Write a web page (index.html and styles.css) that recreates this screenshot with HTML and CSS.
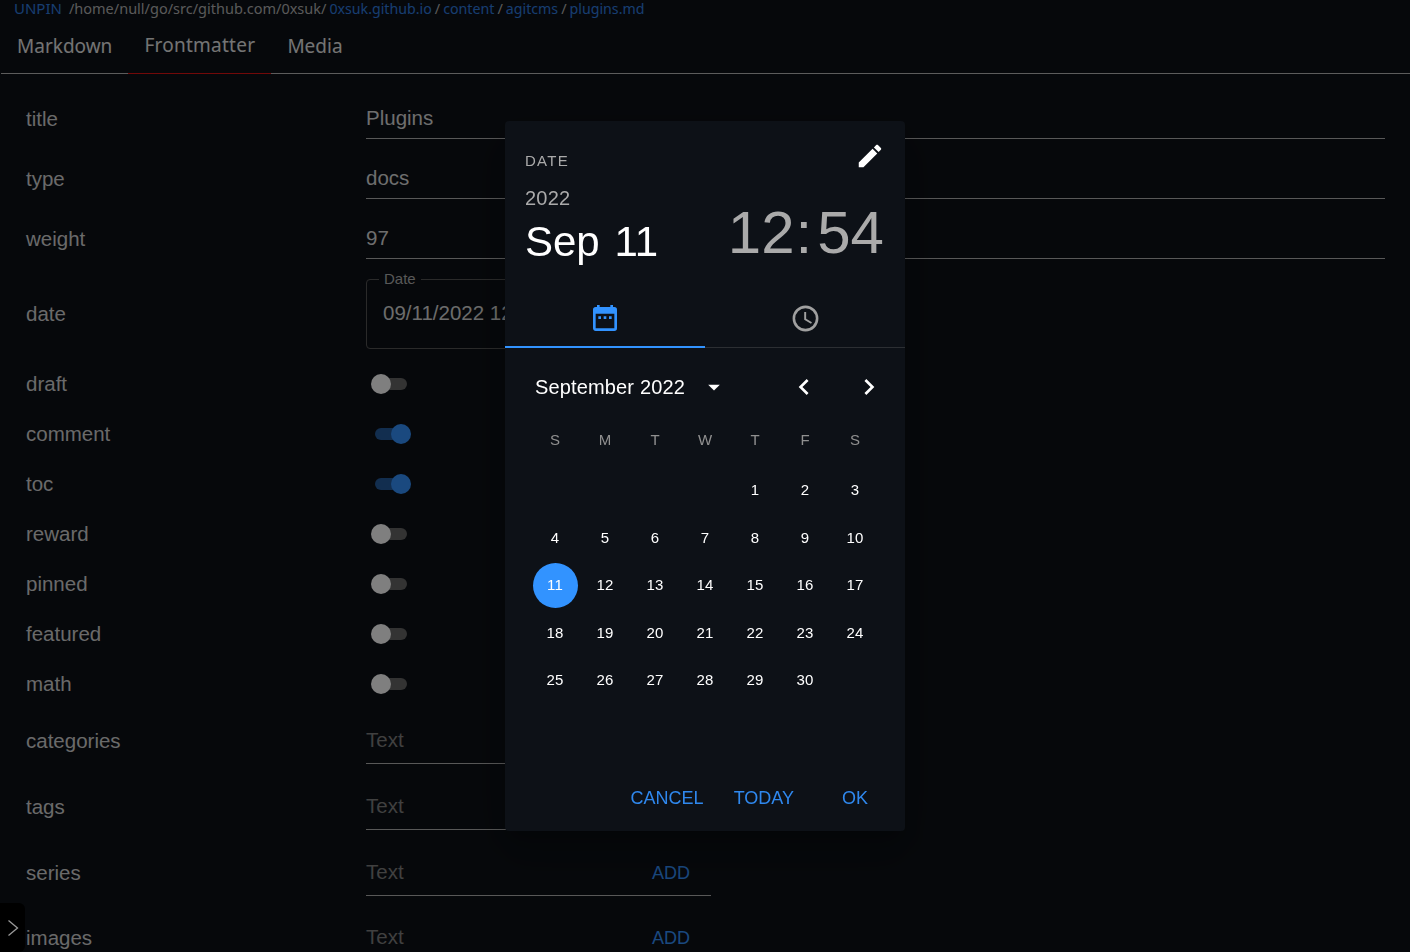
FILE: index.html
```html
<!DOCTYPE html>
<html lang="en">
<head>
  <meta charset="UTF-8">
  <meta name="viewport" content="width=device-width, initial-scale=1.0">
  <title>agitcms</title>
  <link rel="stylesheet" href="styles.css">
</head>

<body>
  <div class="path_bar">
    <a class="unpin">UNPIN</a>
    <span class="path_root">/home/null/go/src/github.com/0xsuk/</span>
    <a>0xsuk.github.io</a><span class="sep">/</span><a>content</a><span class="sep">/</span><a>agitcms</a><span class="sep">/</span><a>plugins.md</a>
  </div>

  <div class="tabs">
    <div class="tab">Markdown</div>
    <div class="tab active">Frontmatter</div>
    <div class="tab">Media</div>
  </div>

  <div class="form">
    <div class="row row_text">
      <div class="label">title</div>
      <div class="field">Plugins</div>
    </div>
    <div class="row row_text">
      <div class="label">type</div>
      <div class="field">docs</div>
    </div>
    <div class="row row_text">
      <div class="label">weight</div>
      <div class="field">97</div>
    </div>
    <div class="row row_date">
      <div class="label">date</div>
      <div class="date_box">
        <span class="date_legend">Date</span>
        09/11/2022 12:54
      </div>
    </div>
    <div class="row row_switch">
      <div class="label">draft</div>
      <div class="switch"><span class="knob"></span></div>
    </div>
    <div class="row row_switch">
      <div class="label">comment</div>
      <div class="switch on"><span class="knob"></span></div>
    </div>
    <div class="row row_switch">
      <div class="label">toc</div>
      <div class="switch on"><span class="knob"></span></div>
    </div>
    <div class="row row_switch">
      <div class="label">reward</div>
      <div class="switch"><span class="knob"></span></div>
    </div>
    <div class="row row_switch">
      <div class="label">pinned</div>
      <div class="switch"><span class="knob"></span></div>
    </div>
    <div class="row row_switch">
      <div class="label">featured</div>
      <div class="switch"><span class="knob"></span></div>
    </div>
    <div class="row row_switch">
      <div class="label">math</div>
      <div class="switch"><span class="knob"></span></div>
    </div>
    <div class="row row_chips">
      <div class="label">categories</div>
      <div class="chip_field"><span class="placeholder">Text</span></div>
    </div>
    <div class="row row_chips">
      <div class="label">tags</div>
      <div class="chip_field"><span class="placeholder">Text</span></div>
    </div>
    <div class="row row_chips">
      <div class="label">series</div>
      <div class="chip_field"><span class="placeholder">Text</span><span class="add">ADD</span></div>
    </div>
    <div class="row row_chips">
      <div class="label">images</div>
      <div class="chip_field"><span class="placeholder">Text</span><span class="add">ADD</span></div>
    </div>
  </div>

  <div class="overlay">
    <div class="dialog">
      <div class="dialog_head">
        <div class="head_left">
          <div class="head_kind">DATE</div>
          <div class="head_year">2022</div>
          <div class="head_date">Sep 11</div>
        </div>
        <div class="head_right">
          <svg class="pencil" viewBox="0 0 24 24"><path d="M20.71,7.04C21.1,6.65 21.1,6 20.71,5.63L18.37,3.29C18,2.9 17.35,2.9 16.96,3.29L15.12,5.12L18.87,8.87M3,17.25V21H6.75L17.81,9.93L14.06,6.18L3,17.25Z"/></svg>
          <div class="head_time"><span>12</span><span class="colon">:</span><span>54</span></div>
        </div>
      </div>

      <div class="picker_tabs">
        <div class="picker_tab active">
          <svg viewBox="0 0 24 24"><path fill-rule="evenodd" d="M19,3A2,2 0 0,1 21,5V19A2,2 0 0,1 19,21H5C3.89,21 3,20.1 3,19V5A2,2 0 0,1 5,3H6V1.5H8V3H16V1.5H18V3H19ZM19,19V8H5V19H19ZM7,10V12H9V10H7ZM11,10V12H13V10H11ZM15,10V12H17V10H15Z"/></svg>
        </div>
        <div class="picker_tab">
          <svg viewBox="0 0 24 24"><path d="M12,20A8,8 0 0,0 20,12A8,8 0 0,0 12,4A8,8 0 0,0 4,12A8,8 0 0,0 12,20M12,2A10,10 0 0,1 22,12A10,10 0 0,1 12,22C6.47,22 2,17.5 2,12A10,10 0 0,1 12,2M12.5,7V12.25L17,14.92L16.25,16.15L11,13V7H12.5Z"/></svg>
        </div>
      </div>

      <div class="month_row">
        <span class="month_name">September 2022</span>
        <svg class="caret" viewBox="0 0 24 24"><path d="M7,10L12,15L17,10H7Z"/></svg>
        <svg class="chev chev_prev" viewBox="0 0 24 24"><path d="M15.41,16.58L10.83,12L15.41,7.41L14,6L8,12L14,18L15.41,16.58Z"/></svg>
        <svg class="chev" viewBox="0 0 24 24"><path d="M8.59,16.58L13.17,12L8.59,7.41L10,6L16,12L10,18L8.59,16.58Z"/></svg>
      </div>

      <div class="weekdays">
        <span>S</span><span>M</span><span>T</span><span>W</span><span>T</span><span>F</span><span>S</span>
      </div>

      <div class="days">
        <span></span><span></span><span></span><span></span>
        <span>1</span><span>2</span><span>3</span>
        <span>4</span><span>5</span><span>6</span><span>7</span><span>8</span><span>9</span><span>10</span>
        <span class="selected">11</span><span>12</span><span>13</span><span>14</span><span>15</span><span>16</span><span>17</span>
        <span>18</span><span>19</span><span>20</span><span>21</span><span>22</span><span>23</span><span>24</span>
        <span>25</span><span>26</span><span>27</span><span>28</span><span>29</span><span>30</span>
      </div>

      <div class="dialog_actions">
        <button>CANCEL</button>
        <button>TODAY</button>
        <button class="ok_btn">OK</button>
      </div>
    </div>
  </div>

  <div class="sidebar_toggle">
    <svg viewBox="0 0 12 18"><polyline points="1.5,1.5 10.5,9 1.5,16.5"/></svg>
  </div>
</body>
</html>
```

FILE: styles.css
```css
body { margin: 0; height: 952px; overflow: hidden; background: #0d1117; color: #dcdcdc; font-family: "Liberation Sans", Arial, sans-serif; }

/* top bars */
.path_bar { height: 18px; box-sizing: border-box; padding: 0 0 2px 14px; display: flex; align-items: baseline; font-family: "Noto Sans", sans-serif; font-size: 14.5px; line-height: 16px; white-space: nowrap; }
.path_bar a { color: #2f7de0; font-size: 14.2px; }
.path_bar .unpin { font-size: 15px; }
.path_root { color: #b4b4b4; margin-left: 7px; margin-right: 3px; }
.sep { color: #b4b4b4; margin: 0 3px; }

.tabs { display: flex; height: 55px; margin-left: 1px; border-bottom: 1px solid #b8b8b8; font-family: "Noto Sans", sans-serif; font-size: 19px; }
.tab { padding: 0 16px; display: flex; align-items: center; color: #e8e8e8; }
.tab.active { width: 111px; height: 54px; letter-spacing: 0.25px; white-space: nowrap; border-bottom: 1px solid #e51212; margin-bottom: -1px; padding-bottom: 1px; }

/* form */
.form { padding: 15px 25px 0 26px; }
.row { display: grid; grid-template-columns: 340px 1fr; }
.label { font-size: 20.5px; align-self: center; color: #d4d4d4; }

.row_text { height: 60px; }
.field { height: 50px; box-sizing: border-box; padding-top: 17px; line-height: 24px; font-size: 20.5px; border-bottom: 1px solid #b0b0b0; }

.row_date { height: 90px; align-items: center; }
.date_box { position: relative; width: 345px; height: 70px; box-sizing: border-box; padding: 21px 16px; line-height: 24px; font-size: 20.5px; color: #d8d8d8; border: 1px solid #555; border-radius: 4px; }
.date_legend { position: absolute; top: -10px; left: 12px; padding: 0 5px; font-size: 15px; line-height: 18px; color: #b0b0b0; background: #0d1117; }

.row_switch { height: 50px; align-items: center; }
.switch { position: relative; width: 32px; height: 12px; margin-left: 9px; border-radius: 6px; background: #666; }
.knob { position: absolute; top: -4px; left: -4px; width: 20px; height: 20px; border-radius: 50%; background: #fff; }
.switch.on { background: #255c9f; }
.switch.on .knob { left: 16px; background: #3493ff; }

.row_chips { height: 66px; }
.row_chips .label { margin-top: -2px; }
.row_chips:last-child .label { margin-top: -4px; }
.chip_field { width: 345px; height: 55px; box-sizing: border-box; padding: 19px 21px 0 0; display: flex; justify-content: space-between; line-height: 24px; border-bottom: 1px solid #b0b0b0; }
.row_chips:last-child .chip_field { padding-top: 18px; }
.placeholder { font-size: 20.5px; color: #808080; }
.add { font-size: 18px; line-height: 26px; color: #3493ff; }

/* date picker dialog */
.overlay { position: fixed; top: 0; left: 0; right: 0; bottom: 0; display: flex; align-items: center; justify-content: center; background: rgba(0, 0, 0, 0.5); }
.dialog { width: 400px; height: 710px; display: flex; flex-direction: column; background: #0d1117; color: #fff; border-radius: 4px; box-shadow: 0 11px 15px -7px rgba(0,0,0,.2), 0 24px 38px 3px rgba(0,0,0,.14), 0 9px 46px 8px rgba(0,0,0,.12); }

.dialog_head { height: 170px; box-sizing: border-box; padding: 20px 20px 0 20px; display: flex; justify-content: space-between; }
.head_left { padding-top: 12px; }
.head_kind { font-size: 15px; line-height: 16px; letter-spacing: 1.25px; color: #aaa; }
.head_year { margin-top: 17px; font-size: 20px; line-height: 24px; letter-spacing: 0.2px; color: #aaa; }
.head_date { margin-top: 8px; font-size: 42px; line-height: 48px; word-spacing: 3px; }
.head_right { display: flex; flex-direction: column; align-items: flex-end; }
.pencil { width: 30px; height: 30px; fill: #fff; }
.head_time { margin-top: 32px; margin-right: 1px; display: flex; font-size: 60px; line-height: 60px; color: #aaa; }
.colon { margin: 0 5px 0 1px; }

.picker_tabs { display: flex; height: 57px; box-sizing: border-box; border-bottom: 1px solid #2c2f33; }
.picker_tab { flex: 1; padding-bottom: 1px; display: flex; align-items: center; justify-content: center; }
.picker_tab svg { width: 31px; height: 31px; fill: #a0a0a0; }
.picker_tab.active { height: 57px; padding-bottom: 0; box-sizing: border-box; border-bottom: 2px solid #3293ff; }
.picker_tab.active svg { width: 32px; height: 32px; fill: #3293ff; }

.month_row { margin-top: 23px; padding: 0 20px 0 30px; height: 32px; display: flex; align-items: center; }
.month_name { font-size: 20px; letter-spacing: 0.15px; }
.caret { width: 28px; height: 28px; margin-left: 15px; fill: #fff; }
.chev { width: 32px; height: 32px; fill: #fff; }
.chev_prev { margin-left: auto; margin-right: 33px; }

.weekdays, .days { margin-left: 25px; display: grid; grid-template-columns: repeat(7, 50px); grid-auto-rows: 47.5px; justify-items: center; align-items: center; font-size: 15px; }
.weekdays { margin-top: 13px; color: #909090; }
.days { margin-top: 2.5px; letter-spacing: 0.2px; }
.days .selected { width: 45px; height: 45px; margin-top: 2px; line-height: 44px; text-align: center; border-radius: 50%; background: #3293ff; }

.dialog_actions { margin-top: auto; padding: 0 6px 15px 0; display: flex; justify-content: flex-end; }
.dialog_actions button { height: 36px; padding: 0 15px; border: none; background: none; font: inherit; font-size: 18px; color: #2f88ee; }
.dialog_actions .ok_btn { min-width: 88px; margin-left: 2px; }

/* sits above the overlay */
.sidebar_toggle { position: fixed; left: 0; bottom: 0; width: 25px; height: 49px; display: flex; align-items: center; justify-content: center; background: #000; border-radius: 0 6px 6px 0; }
.sidebar_toggle svg { width: 12px; height: 18px; fill: none; stroke: #9a9a9a; stroke-width: 1.3; }
```
